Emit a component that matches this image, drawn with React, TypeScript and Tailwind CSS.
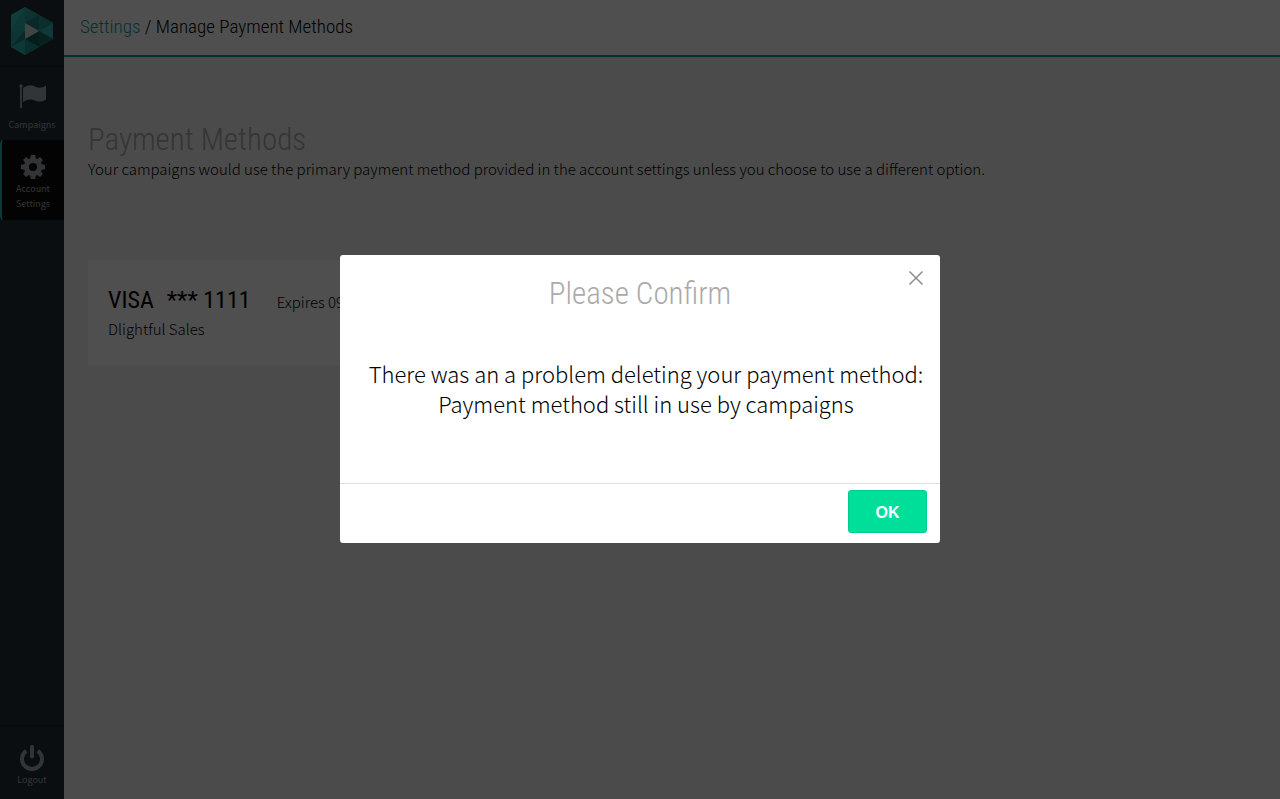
import type { ReactNode } from 'react';

const body = "font-['Noto_Sans_CJK_JP','Noto_Sans',sans-serif]";
const condensed = "font-['Roboto_Condensed','Liberation_Sans_Narrow',Roboto,sans-serif]";

function Logo() {
  return (
    <svg viewBox="0 0 42 48" className="h-12 w-[42px]" aria-label="Home">
      <path d="M14 0 42 16 42 32 14 48 0 40 0 8Z" fill="#1f9f99" />
      <path d="M14 0 0 8 0 24Z" fill="#35c2ba" />
      <path d="M14 0 0 24 14 24Z" fill="#2db5ad" />
      <path d="M14 0 28 8 14 16Z" fill="#27a59e" />
      <path d="M28 8 28 24 14 16Z" fill="#1c8680" />
      <path d="M28 8 42 16 28 24Z" fill="#229790" />
      <path d="M42 16 42 32 28 24Z" fill="#32b5ad" />
      <path d="M28 24 42 32 28 40Z" fill="#176a66" />
      <path d="M28 24 28 40 14 32Z" fill="#135d5a" />
      <path d="M0 24 14 24 0 40Z" fill="#28aba4" />
      <path d="M14 24 14 32 0 40Z" fill="#1b8580" />
      <path d="M0 40 14 32 14 48Z" fill="#2db5ad" />
      <path d="M14 32 28 40 14 48Z" fill="#229690" />
      <path d="M14 16 28 24 14 32Z" fill="#d5dcdb" />
    </svg>
  );
}

function FlagIcon() {
  return (
    <svg viewBox="0 0 28 26" className="h-[26px] w-7" fill="currentColor" aria-hidden="true">
      <circle cx="3" cy="3" r="1.8" />
      <path d="M2.100 3H3.900V25H2.100Z" />
      <path d="M5 5C10 1.500 13 1.500 17 3.500S24 5 28 2.500V16.500C24 19 21 19 17 17.500S10 16 5 19Z" />
    </svg>
  );
}

function GearIcon() {
  return (
    <svg viewBox="-12 -12 24 24" className="size-6" fill="currentColor" aria-hidden="true">
      <path
        fillRule="evenodd"
        d="M-2.200-12H2.200L2.800-8.700 4.400-8 7-9.900 9.900-7 8-4.400 8.700-2.800 12-2.200V2.200L8.700 2.800 8 4.400 9.900 7 7 9.900 4.400 8 2.800 8.700 2.200 12H-2.200L-2.800 8.700-4.400 8-7 9.900-9.900 7-8 4.400-8.700 2.800-12 2.200V-2.200L-8.700-2.800-8-4.400-9.900-7-7-9.900-4.400-8-2.800-8.700ZM0-4A4 4 0 1 0 0 4 4 4 0 1 0 0-4Z"
      />
    </svg>
  );
}

function PowerIcon() {
  return (
    <svg viewBox="0 0 24 26" className="h-[26px] w-6" fill="none" stroke="currentColor" strokeWidth="4" aria-hidden="true">
      <path d="M6.200 5.800A10 10 0 1 0 17.800 5.800" />
      <path d="M12 2V11.500" strokeLinecap="round" />
    </svg>
  );
}

function NavItem({ icon, className, children }: { icon: ReactNode; className: string; children: ReactNode }) {
  return (
    <a href="#" className={`flex flex-col items-center text-center text-[9px] leading-[15px] text-[#a3a8ac] ${className}`}>
      {icon}
      <span>{children}</span>
    </a>
  );
}

export default function App() {
  return (
    <div className={`flex min-h-screen bg-[#f3f3f3] text-black ${body}`}>
      <nav className="flex w-16 shrink-0 flex-col bg-[#222d35]">
        <a href="#" className="flex h-[67px] justify-center border-b border-[#1a242b] pt-[7px]">
          <Logo />
        </a>
        <NavItem icon={<FlagIcon />} className="h-[73px] gap-2 pt-4">Campaigns</NavItem>
        <NavItem icon={<GearIcon />} className="h-20 gap-0.5 rounded-l-sm border-l-2 border-[#27b5ad] bg-[#0b0b0b] pt-[15px]">
          Account
          <br />
          Settings
        </NavItem>
        <NavItem icon={<PowerIcon />} className="mt-auto h-[74px] gap-px border-t border-[#1a242b] pt-[19px]">Logout</NavItem>
      </nav>

      <div className="min-w-0 flex-1">
        <header className={`h-[57px] border-b-2 border-[#139a98] bg-white px-4 pt-3 text-[19px] leading-[30px] font-light ${condensed}`}>
          <p>
            <a href="#" className="text-[#139a98]">Settings</a> / Manage Payment Methods
          </p>
        </header>

        <main className="px-6 pt-[63px]">
          <h1 className={`text-[31px] leading-10 font-light text-[#aaa] ${condensed}`}>Payment Methods</h1>
          <p className="text-[15px] leading-[18px] font-light text-black">
            Your campaigns would use the primary payment method provided in the account settings unless you choose to use a
            different option.
          </p>

          <section className="mt-[82px] h-[106px] w-[400px] bg-white px-5 pt-6">
            <div className="flex items-baseline">
              <h2 className={`flex gap-[13px] text-2xl leading-8 ${condensed}`}>
                <span>VISA</span>
                <span>*** 1111</span>
              </h2>
              <span className="ml-[26px] text-[15px] leading-5 font-light">Expires 09/2019</span>
            </div>
            <p className="text-[15px] leading-[26px] font-light">Dlightful Sales</p>
          </section>
        </main>
      </div>

      <div className="fixed inset-0 flex items-center justify-center bg-black/69 pb-px">
        <div role="dialog" aria-modal="true" aria-labelledby="dialog-title" className="relative w-[600px] rounded-[3px] bg-white">
          <button type="button" aria-label="Close" className="absolute top-[15px] right-4 text-[#8c8c8c]">
            <svg viewBox="0 0 16 16" className="size-4" fill="none" stroke="currentColor" strokeWidth="1.5">
              <path d="M1.500 1.500 14.500 14.500M14.500 1.500 1.500 14.500" />
            </svg>
          </button>
          <h2 id="dialog-title" className={`pt-[19px] text-center text-[31px] leading-10 font-light text-[#aaa] ${condensed}`}>
            Please Confirm
          </h2>
          <p className="pt-11 pb-[65px] pl-3 text-center text-[22px] leading-[30px] font-light">
            There was an a problem deleting your payment method:
            <br />
            Payment method still in use by campaigns
          </p>
          <div className="flex h-[60px] justify-end border-t border-[#ddd] px-[13px] pt-1.5">
            <button
              type="button"
              className="h-[43px] w-[79px] rounded-[3px] border border-[#00cc8c] bg-[#00df9a] pt-0.5 font-['Liberation_Sans',sans-serif] text-base font-bold text-white"
            >
              OK
            </button>
          </div>
        </div>
      </div>
    </div>
  );
}
